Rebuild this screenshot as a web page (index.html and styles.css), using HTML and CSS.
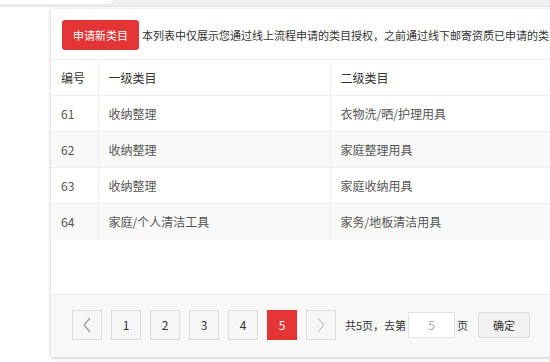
FILE: index.html
```html
<!DOCTYPE html>
<html lang="zh-CN">
<head>
  <meta charset="UTF-8" />
  <title>类目管理</title>
  <link rel="stylesheet" href="styles.css">
</head>
<body>
  <div class="topbar">
    <div class="top-tab"></div>
    <div class="top-rest"></div>
  </div>
  <div class="page">
    <div class="card">
      <div class="toolbar">
        <button class="apply-button">申请新类目</button>
        <span class="notice">本列表中仅展示您通过线上流程申请的类目授权，之前通过线下邮寄资质已申请的类目</span>
      </div>
      <table class="cat-table">
        <thead>
          <tr>
            <th class="col-id">编号</th>
            <th class="col-first">一级类目</th>
            <th>二级类目</th>
          </tr>
        </thead>
        <tbody>
          <tr><td>61</td><td>收纳整理</td><td>衣物洗/晒/护理用具</td></tr>
          <tr><td>62</td><td>收纳整理</td><td>家庭整理用具</td></tr>
          <tr><td>63</td><td>收纳整理</td><td>家庭收纳用具</td></tr>
          <tr><td>64</td><td>家庭/个人清洁工具</td><td>家务/地板清洁用具</td></tr>
        </tbody>
      </table>
      <div class="spacer"></div>
      <div class="footer">
        <div class="pager">
          <a class="page-btn arrow">
            <svg width="10" height="16" viewBox="0 0 10 16"><path d="M8 1 L2 8 L8 15" fill="none" stroke="#999" stroke-width="1.2"/></svg>
          </a>
          <a class="page-btn">1</a>
          <a class="page-btn">2</a>
          <a class="page-btn">3</a>
          <a class="page-btn">4</a>
          <a class="page-btn current">5</a>
          <a class="page-btn arrow disabled">
            <svg width="10" height="16" viewBox="0 0 10 16"><path d="M2 1 L8 8 L2 15" fill="none" stroke="#ccc" stroke-width="1.2"/></svg>
          </a>
          <span class="pager-text">共5页，去第</span>
          <input class="pager-input" type="text" value="5" />
          <span class="pager-text">页</span>
          <button class="confirm-button">确定</button>
        </div>
      </div>
    </div>
  </div>
</body>
</html>
```

FILE: styles.css
```css
* {
  margin: 0;
  padding: 0;
  box-sizing: border-box;
}
html, body {
  width: 100%;
  height: 100vh;
  overflow: hidden;
}
body {
  font-family: "Microsoft YaHei", "Noto Sans CJK SC", sans-serif;
  font-size: 12px;
  color: #333;
  background: #fff;
}
.topbar {
  display: flex;
  height: 7px;
  background: #f0f0f0;
  border-bottom: 1px solid #e4e4e4;
}
.top-tab {
  width: 114px;
  height: 5px;
  background: #fff;
  border-radius: 0 0 5px 0;
  border-bottom: 1px solid #e6e6e6;
  border-right: 1px solid #e6e6e6;
}
.top-rest {
  flex: 1;
}
.page {
  padding: 2px 0 0 51px;
}
.card {
  width: 620px;
  background: #fff;
  box-shadow: 0 1px 4px rgba(0, 0, 0, 0.22);
}
.toolbar {
  display: flex;
  align-items: center;
  gap: 3px;
  padding: 11px 11px 9px;
  white-space: nowrap;
  overflow: hidden;
}
.apply-button {
  flex: none;
  width: 77px;
  height: 30px;
  border: none;
  border-radius: 3px;
  background: #e33436;
  color: #fff;
  font-family: inherit;
  font-size: 11px;
}
.notice {
  color: #333;
  font-size: 11px;
}
.cat-table {
  width: 100%;
  border-collapse: collapse;
  table-layout: fixed;
}
.cat-table th,
.cat-table td {
  height: 36px;
  padding: 0 10px;
  text-align: left;
  font-weight: normal;
  border-top: 1px solid #efefef;
  border-right: 1px solid #efefef;
}
.cat-table th {
  font-size: 12px;
  color: #333;
}
.cat-table td {
  color: #555;
  font-size: 12px;
}
.col-id {
  width: 47px;
}
.col-first {
  width: 232px;
}
.cat-table tbody tr:nth-child(even) td {
  background: #f9f9f9;
}
.spacer {
  height: 54px;
}
.footer {
  height: 63px;
  padding: 15px 0 0 21px;
  background: #f8f8f8;
  border-top: 1px solid #ececec;
}
.pager {
  display: flex;
  align-items: center;
  gap: 9px;
}
.page-btn {
  display: flex;
  align-items: center;
  justify-content: center;
  width: 30px;
  height: 30px;
  border: 1px solid #dcdcdc;
  background: #f6f6f6;
  color: #333;
  font-size: 12px;
}
.page-btn.current {
  background: #e33436;
  border-color: #e33436;
  color: #fff;
}
.pager-text {
  color: #333;
  font-size: 11px;
}
.pager-text + .pager-input {
  margin-left: -7px;
}
.pager-input + .pager-text {
  margin-left: -7px;
}
.pager-input {
  width: 47px;
  height: 26px;
  border: 1px solid #e2e2e2;
  background: #fff;
  color: #aaa;
  text-align: center;
  font-family: inherit;
  font-size: 12px;
}
.confirm-button {
  margin-left: 1px;
  width: 52px;
  height: 26px;
  border: 1px solid #dcdcdc;
  border-radius: 2px;
  background: #f2f2f2;
  color: #333;
  font-family: inherit;
  font-size: 11px;
}
```
